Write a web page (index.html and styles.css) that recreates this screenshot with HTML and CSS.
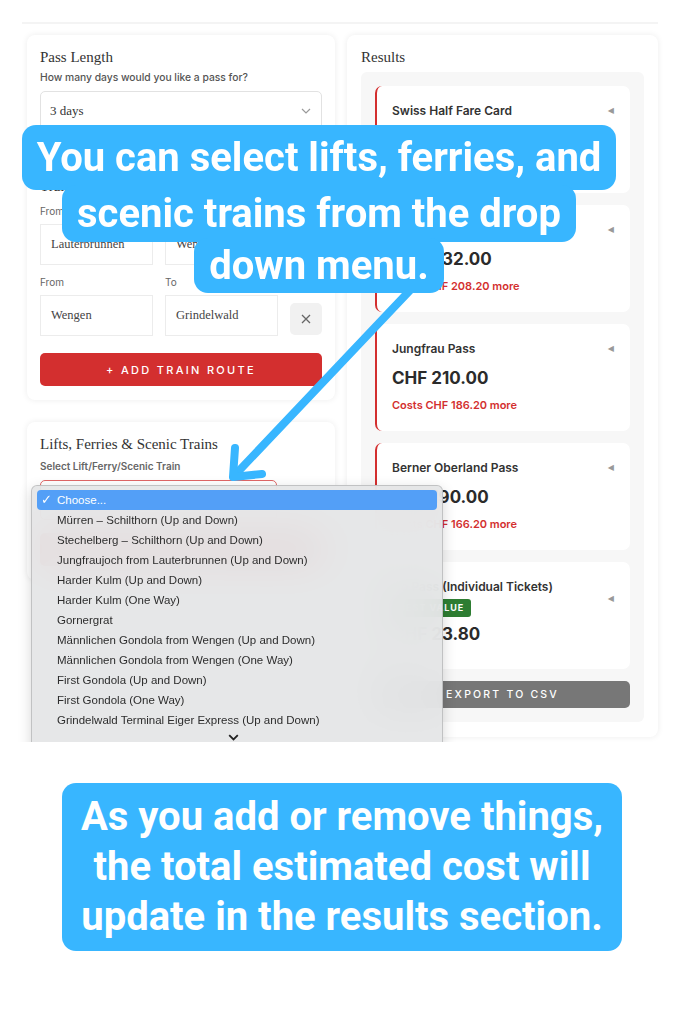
FILE: index.html
```html
<!DOCTYPE html>
<html lang="en">
<head>
<meta charset="utf-8">
<title>Swiss Pass Calculator</title>
<link rel="stylesheet" href="styles.css">
</head>
<body>
<div class="shot">
  <div class="topline"></div>
  <div class="columns">
    <div class="col-left">
      <section class="card">
        <h2 class="card-title">Pass Length</h2>
        <p class="hint">How many days would you like a pass for?</p>
        <div class="select">
          <span>3 days</span>
          <svg class="chev" width="10" height="6" viewBox="0 0 10 6"><path d="M1 1l4 4 4-4" fill="none" stroke="#9a9a9a" stroke-width="1.2"/></svg>
        </div>
        <h2 class="card-title routes-title">Train Routes</h2>
        <div class="route-row">
          <div class="field"><label>From</label><div class="input">Lauterbrunnen</div></div>
          <div class="field"><label>To</label><div class="input">Wengen</div></div>
          <button class="remove"><svg width="10" height="10" viewBox="0 0 10 10"><path d="M1 1l8 8M9 1l-8 8" stroke="#666" stroke-width="1.3"/></svg></button>
        </div>
        <div class="route-row second">
          <div class="field"><label>From</label><div class="input">Wengen</div></div>
          <div class="field"><label>To</label><div class="input">Grindelwald</div></div>
          <button class="remove"><svg width="10" height="10" viewBox="0 0 10 10"><path d="M1 1l8 8M9 1l-8 8" stroke="#666" stroke-width="1.3"/></svg></button>
        </div>
        <button class="btn-red">+ ADD TRAIN ROUTE</button>
      </section>
      <section class="card card-lifts">
        <h2 class="card-title">Lifts, Ferries &amp; Scenic Trains</h2>
        <p class="hint strong">Select Lift/Ferry/Scenic Train</p>
        <div class="select select-red"><span>Choose...</span></div>
        <button class="btn-red lift-btn">+ ADD LIFT</button>
      </section>
    </div>
    <div class="col-right">
      <section class="card results">
        <h2 class="card-title">Results</h2>
        <div class="panel">
          <div class="rc">
            <div class="rc-head"><div class="rc-title">Swiss Half Fare Card</div><span class="tri">&#9664;</span></div>
            <div class="rc-price">CHF 140.00</div>
            <div class="rc-diff">Costs CHF 116.20 more</div>
          </div>
          <div class="rc">
            <div class="rc-head"><div class="rc-title">Swiss Travel Pass</div><span class="tri">&#9664;</span></div>
            <div class="rc-price">CHF 232.00</div>
            <div class="rc-diff">Costs CHF 208.20 more</div>
          </div>
          <div class="rc">
            <div class="rc-head"><div class="rc-title">Jungfrau Pass</div><span class="tri">&#9664;</span></div>
            <div class="rc-price">CHF 210.00</div>
            <div class="rc-diff">Costs CHF 186.20 more</div>
          </div>
          <div class="rc">
            <div class="rc-head"><div class="rc-title">Berner Oberland Pass</div><span class="tri">&#9664;</span></div>
            <div class="rc-price">CHF 190.00</div>
            <div class="rc-diff">Costs CHF 166.20 more</div>
          </div>
          <div class="rc best">
            <div class="rc-head"><div><div class="rc-title">No Pass (Individual Tickets)</div><span class="badge">BEST VALUE</span></div><span class="tri">&#9664;</span></div>
            <div class="rc-price best-price">CHF 23.80</div>
          </div>
          <button class="btn-grey">EXPORT TO CSV</button>
        </div>
      </section>
    </div>
  </div>

  <div class="menu">
    <div class="opt sel"><span class="check">&#10003;</span>Choose...</div>
    <div class="opt">Mürren – Schilthorn (Up and Down)</div>
    <div class="opt">Stechelberg – Schilthorn (Up and Down)</div>
    <div class="opt">Jungfraujoch from Lauterbrunnen (Up and Down)</div>
    <div class="opt">Harder Kulm (Up and Down)</div>
    <div class="opt">Harder Kulm (One Way)</div>
    <div class="opt">Gornergrat</div>
    <div class="opt">Männlichen Gondola from Wengen (Up and Down)</div>
    <div class="opt">Männlichen Gondola from Wengen (One Way)</div>
    <div class="opt">First Gondola (Up and Down)</div>
    <div class="opt">First Gondola (One Way)</div>
    <div class="opt">Grindelwald Terminal Eiger Express (Up and Down)</div>
    <div class="more"><svg width="11" height="7" viewBox="0 0 11 7"><path d="M1.2 1.2l4.3 4.3 4.3-4.3" fill="none" stroke="#222" stroke-width="1.8"/></svg></div>
  </div>

  <svg class="arrow" width="683" height="742" viewBox="0 0 683 742">
    <path d="M416 284L234 476" stroke="#38b6ff" stroke-width="8" stroke-linecap="round" fill="none"/>
    <path d="M235 448L233 477L262 474" stroke="#38b6ff" stroke-width="8" stroke-linecap="round" stroke-linejoin="round" fill="none"/>
  </svg>

  <div class="callout">
    <span class="cl cl1">You can select lifts, ferries, and</span>
    <span class="cl cl2">scenic trains from the drop</span>
    <span class="cl cl3">down menu.</span>
  </div>
</div>

<div class="note">
  <span class="nl">As you add or remove things,</span>
  <span class="nl">the total estimated cost will</span>
  <span class="nl">update in the results section.</span>
</div>
</body>
</html>
```
FILE: styles.css
```css
* { box-sizing: border-box; }

body {
  margin: 0;
  background: #ffffff;
  font-family: Inter, "Liberation Sans", sans-serif;
  color: #333;
}

.shot {
  position: relative;
  width: 683px;
  height: 742px;
  overflow: hidden;
}

.topline {
  margin: 22px 25px 0 22px;
  height: 2px;
  background: #f4f4f4;
}

.columns {
  display: grid;
  grid-template-columns: 308px 311px;
  column-gap: 12px;
  padding-left: 27px;
  margin-top: 11px;
  align-items: start;
}

.col-left {
  display: flex;
  flex-direction: column;
  gap: 22px;
}

.card {
  background: #fff;
  border-radius: 8px;
  box-shadow: 0 0 6px rgba(0, 0, 0, 0.08);
  padding: 14px 13px;
}

.card-title {
  margin: 0;
  font-family: "Liberation Serif", serif;
  font-weight: 400;
  font-size: 15px;
  line-height: 17px;
  color: #333;
}

.hint {
  margin: 5px 0 0;
  font-size: 10.3px;
  line-height: 12px;
  color: #555;
  font-weight: 500;
}

.hint.strong {
  margin-top: 7px;
  font-size: 10px;
  font-weight: 600;
  color: #666;
}

.select {
  margin-top: 8px;
  height: 40px;
  border: 1px solid #e2e2e2;
  border-radius: 5px;
  padding: 0 10px 0 9px;
  display: flex;
  align-items: center;
  justify-content: space-between;
  font-family: "Liberation Serif", serif;
  font-size: 13px;
  color: #333;
}

.routes-title { margin-top: 47px; }

.route-row {
  margin-top: 10px;
  display: grid;
  grid-template-columns: 113px 113px 32px;
  column-gap: 12px;
}

.route-row.second { margin-top: 11px; }

.field label {
  display: block;
  font-size: 10px;
  line-height: 12px;
  color: #666;
  margin-bottom: 7px;
}

.input {
  height: 41px;
  border: 1.5px solid #ececec;
  padding-left: 10px;
  display: flex;
  align-items: center;
  font-family: "Liberation Serif", serif;
  font-size: 12.5px;
  color: #444;
}

.remove {
  align-self: end;
  margin-bottom: 1px;
  height: 32px;
  border: none;
  border-radius: 5px;
  background: #f1f1f1;
  display: flex;
  align-items: center;
  justify-content: center;
  padding: 0;
}

.btn-red {
  display: block;
  width: 100%;
  margin-top: 17px;
  height: 33px;
  border: none;
  border-radius: 5px;
  background: #d32f2f;
  color: #fff;
  font-family: Inter, sans-serif;
  font-size: 11px;
  font-weight: 500;
  letter-spacing: 2.3px;
}

.select-red {
  width: 237px;
  border-color: #e06666;
}

.lift-btn { margin-top: 13px; }

.results { padding: 14px 14px 15px; }

.panel {
  margin-top: 6px;
  background: #f7f7f7;
  border-radius: 6px;
  padding: 14px 14px;
  display: flex;
  flex-direction: column;
  gap: 12px;
}

.rc {
  height: 107px;
  background: #fff;
  border-radius: 7px;
  border-left: 2px solid #d32f2f;
  padding: 17px 15px 0 15px;
}

.rc.best { border-left-color: #2e7d32; }

.rc-head {
  display: flex;
  align-items: center;
  justify-content: space-between;
}

.rc-title {
  font-size: 12px;
  font-weight: 600;
  line-height: 15px;
  color: #333;
}

.tri {
  font-size: 8px;
  color: #999;
  font-family: "DejaVu Sans", sans-serif;
  margin-right: 1px;
}

.rc-price {
  margin-top: 12px;
  font-size: 17px;
  font-weight: 700;
  line-height: 20px;
  color: #2b2b2b;
}

.rc-price.best-price { margin-top: 7px; }

.rc-diff {
  margin-top: 11px;
  font-size: 11px;
  font-weight: 600;
  line-height: 13px;
  color: #d32f2f;
}

.badge {
  display: inline-block;
  margin-top: 5px;
  height: 18px;
  line-height: 18px;
  padding: 0 7px;
  background: #2e7d32;
  color: #fff;
  font-size: 9px;
  font-weight: 700;
  letter-spacing: 1px;
  border-radius: 3px;
}

.btn-grey {
  height: 27px;
  border: none;
  border-radius: 5px;
  background: #777;
  color: #fff;
  font-family: Inter, sans-serif;
  font-size: 10.5px;
  font-weight: 500;
  letter-spacing: 2.2px;
}

/* native dropdown overlay */
.menu {
  position: absolute;
  left: 31px;
  top: 485px;
  width: 412px;
  height: 280px;
  z-index: 2;
  background: rgba(228, 229, 231, 0.94);
  backdrop-filter: blur(20px);
  border: 1px solid rgba(0, 0, 0, 0.16);
  border-radius: 6px;
  box-shadow: 0 4px 14px rgba(0, 0, 0, 0.16);
  padding: 4px 5px;
  font-family: "Liberation Sans", sans-serif;
  font-size: 11.5px;
  color: #2d2d2d;
}

.opt {
  position: relative;
  height: 20px;
  line-height: 20px;
  padding-left: 20px;
  border-radius: 4px;
  white-space: nowrap;
}

.opt.sel {
  background: #539ff7;
  color: #fff;
}

.check {
  position: absolute;
  left: 4px;
  top: 0;
  font-family: "DejaVu Sans", sans-serif;
  font-size: 13px;
  font-weight: 700;
}

.more {
  height: 14px;
  display: flex;
  justify-content: center;
  align-items: center;
  padding-right: 8px;
}

.arrow {
  position: absolute;
  left: 0;
  top: 0;
  z-index: 3;
  pointer-events: none;
}

.callout {
  position: absolute;
  left: 20px;
  top: 125px;
  width: 598px;
  z-index: 4;
  display: flex;
  flex-direction: column;
  align-items: center;
}

.cl {
  display: block;
  background: #38b6ff;
  color: #fff;
  font-family: Roboto, sans-serif;
  font-weight: 700;
  font-size: 40px;
  border-radius: 14px;
  padding: 0 15px;
  white-space: nowrap;
  text-align: center;
}

.cl1 { height: 65px; line-height: 65px; }
.cl2 { height: 57px; line-height: 57px; margin-top: -5px; }
.cl3 { height: 55px; line-height: 55px; margin-top: -4px; }

.note {
  margin: 41px 0 0 62px;
  width: 560px;
  height: 168px;
  padding-top: 9px;
  background: #38b6ff;
  border-radius: 14px;
  color: #fff;
  font-family: Roboto, sans-serif;
  font-weight: 700;
  font-size: 40px;
  line-height: 50px;
  text-align: center;
}

.nl { display: block; white-space: nowrap; }
```
